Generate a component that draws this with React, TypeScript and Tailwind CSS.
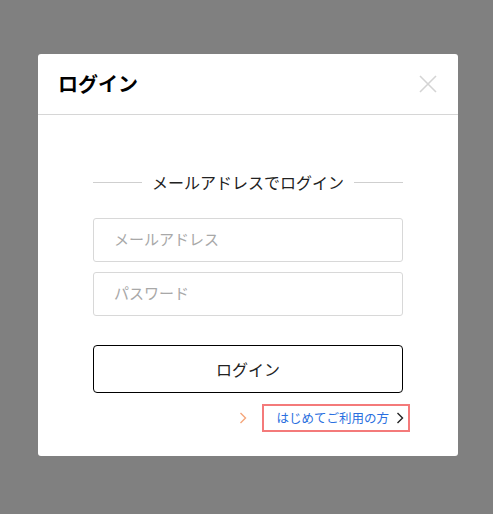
export default function App() {
  return (
    <div
      className="flex h-[514px] w-[493px] items-start bg-[#808080] pl-[38px] pt-[54px]"
      style={{ fontFamily: '"Noto Sans CJK JP", "Noto Sans", sans-serif' }}
    >
      <div className="w-[420px] rounded-[3px] bg-white">
        <div className="flex h-[61px] items-center justify-between border-b border-[#d6d6d6] pl-5 pr-5">
          <span className="text-[20px] font-bold leading-none text-black">ログイン</span>
          <svg width="18" height="18" viewBox="0 0 18 18" className="mr-[1px]">
            <path d="M1 1L17 17M17 1L1 17" stroke="#d4d4d4" strokeWidth="1.6" fill="none" />
          </svg>
        </div>
        <div className="flex flex-col px-[55px] pb-[24px] pt-[59px]">
          <div className="flex items-center gap-[10px]">
            <div className="h-px flex-1 bg-[#cfcfcf]" />
            <span className="text-[16px] leading-none text-[#222]">メールアドレスでログイン</span>
            <div className="h-px flex-1 bg-[#cfcfcf]" />
          </div>
          <input
            type="text"
            placeholder="メールアドレス"
            className="mt-[28px] h-[44px] rounded-[3px] border border-[#d8d8d8] px-5 pb-[3px] text-[15px] placeholder:text-[#a8a8a8]"
          />
          <input
            type="password"
            placeholder="パスワード"
            className="mt-[10px] h-[44px] rounded-[3px] border border-[#d8d8d8] px-5 pb-[3px] text-[15px] placeholder:text-[#a8a8a8]"
          />
          <button
            type="button"
            className="mt-[29px] h-[48px] rounded-[4px] border border-black text-[16px] text-[#222]"
          >
            ログイン
          </button>
          <div className="mt-[11px] flex items-center justify-end gap-[15px]">
            <svg width="8" height="12" viewBox="0 0 8 12">
              <path d="M1.5 1L6.5 6L1.5 11" stroke="#f5a57a" strokeWidth="1.4" fill="none" />
            </svg>
            <a
              href="#"
              className="mr-[-7px] flex h-[28px] items-center gap-[7px] border-2 border-[#f47a7a] pl-[12px] pr-[4px] text-[12.5px] text-[#2a6fe0]"
            >
              はじめてご利用の方
              <svg width="8" height="12" viewBox="0 0 8 12">
                <path d="M1.5 1L6.5 6L1.5 11" stroke="#222" strokeWidth="1.4" fill="none" />
              </svg>
            </a>
          </div>
        </div>
      </div>
    </div>
  );
}
